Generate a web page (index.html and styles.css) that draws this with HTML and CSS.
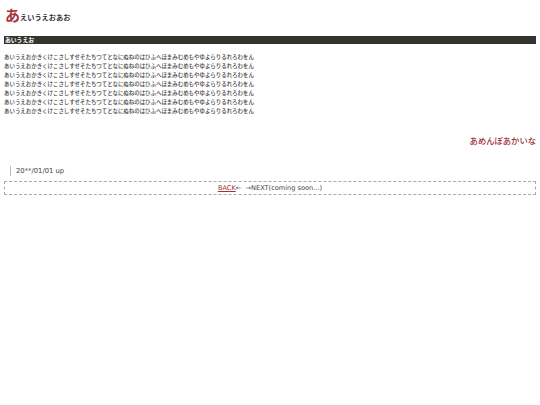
FILE: index.html
```html
<!DOCTYPE html>
<html lang="ja">
<head>
<meta charset="utf-8">
<link rel="stylesheet" href="styles.css">
</head>
<body>
<header class="site-title"><span class="title-big">あ</span><span class="title-small">えいうえおあお</span></header>
<h2 class="bar">あいうえお</h2>
<div class="body-text">
<p>あいうえおかきくけこさしすせそたちつてとなにぬねのはひふへほまみむめもやゆよらりるれろわをん</p>
<p>あいうえおかきくけこさしすせそたちつてとなにぬねのはひふへほまみむめもやゆよらりるれろわをん</p>
<p>あいうえおかきくけこさしすせそたちつてとなにぬねのはひふへほまみむめもやゆよらりるれろわをん</p>
<p>あいうえおかきくけこさしすせそたちつてとなにぬねのはひふへほまみむめもやゆよらりるれろわをん</p>
<p>あいうえおかきくけこさしすせそたちつてとなにぬねのはひふへほまみむめもやゆよらりるれろわをん</p>
<p>あいうえおかきくけこさしすせそたちつてとなにぬねのはひふへほまみむめもやゆよらりるれろわをん</p>
<p>あいうえおかきくけこさしすせそたちつてとなにぬねのはひふへほまみむめもやゆよらりるれろわをん</p>
</div>
<div class="sign">あめんぼあかいな</div>
<div class="date">20**/01/01 up</div>
<nav class="pager"><a href="#" class="back">BACK</a>← &nbsp;→NEXT(coming soon...)</nav>
</body>
</html>
```
FILE: styles.css
```css
html, body { background: #fff; }
body {
  margin: 0;
  padding: 0 4px;
  font-family: "DejaVu Sans", "Noto Sans CJK JP", sans-serif;
  color: #444;
}
.site-title {
  height: 36px;
  display: flex;
  align-items: flex-end;
  padding: 0 0 14px 1px;
  box-sizing: border-box;
  line-height: 1;
}
.title-big {
  font-size: 15px;
  color: #a8323c;
  font-family: "Noto Sans CJK JP", sans-serif;
  font-weight: bold;
}
.title-small {
  font-size: 7.2px;
  font-weight: bold;
  color: #333;
  font-family: "Noto Sans CJK JP", sans-serif;
  padding-bottom: 1px;
}
.bar {
  margin: 0;
  height: 8px;
  background: #34342e;
  color: #fff;
  font-size: 5.8px;
  line-height: 8px;
  font-weight: bold;
  padding-left: 1px;
  font-family: "Noto Sans CJK JP", sans-serif;
}
.body-text {
  padding-top: 9px;
  font-family: "Noto Sans CJK JP", sans-serif;
  font-size: 5.45px;
  font-weight: 500;
  color: #444;
  line-height: 9px;
}
.body-text p { margin: 0; }
.sign {
  margin-top: 18px;
  text-align: right;
  font-family: "Noto Sans CJK JP", sans-serif;
  font-size: 8.3px;
  color: #9a2a35;
  font-weight: 500;
  line-height: 12px;
}
.date {
  margin: 20px 0 0 6px;
  border-left: 1px solid #bbb;
  padding-left: 5px;
  font-size: 6.8px;
  line-height: 10px;
  color: #444;
  font-family: "DejaVu Sans", sans-serif;
}
.pager {
  margin-top: 5px;
  border: 1px dashed #aaa;
  height: 12px;
  line-height: 12px;
  text-align: center;
  font-size: 6.6px;
  color: #444;
  font-family: "DejaVu Sans", sans-serif;
}
.back { color: #a8323c; text-decoration: underline; }
```
